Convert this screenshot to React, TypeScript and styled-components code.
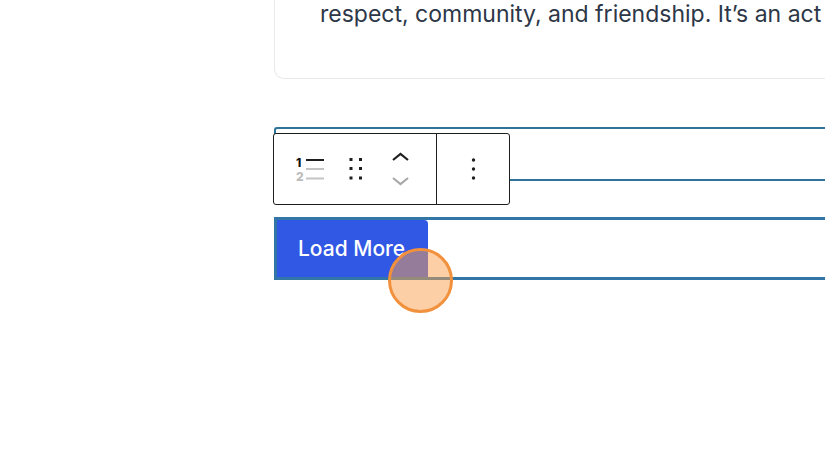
import styled, { createGlobalStyle } from "styled-components";

const GlobalStyle = createGlobalStyle`
  html, body {
    margin: 0;
    padding: 0;
    background: #fff;
    overflow: hidden;
  }
`;

function ListViewIcon() {
  return (
    <svg width="30" height="28" viewBox="0 0 30 28">
      <text x="0" y="12" fontFamily="Inter, sans-serif" fontSize="12" fontWeight="800" fill="#111">1</text>
      <text x="0" y="26" fontFamily="Inter, sans-serif" fontSize="12" fontWeight="800" fill="#bdbdbd">2</text>
      <path d="M10 5h18" stroke="#1e1e1e" strokeWidth="2" />
      <path d="M10 14h18M10 23.5h18" stroke="#c4c4c4" strokeWidth="2" />
    </svg>
  );
}

function DragIcon() {
  return (
    <svg width="14" height="24" viewBox="0 0 14 24" fill="#1e1e1e">
      <rect x="0.5" y="1" width="3" height="3" />
      <rect x="10" y="1" width="3" height="3" />
      <rect x="0.5" y="10" width="3" height="3" />
      <rect x="10" y="10" width="3" height="3" />
      <rect x="0.5" y="19.5" width="3" height="3" />
      <rect x="10" y="19.5" width="3" height="3" />
    </svg>
  );
}

function MoverIcon() {
  return (
    <svg width="18" height="36" viewBox="0 0 18 36" fill="none" strokeWidth="2.2">
      <path d="M1 9l7.5-6L16 9" stroke="#1e1e1e" />
      <path d="M1 27l7.5 6 7.5-6" stroke="#a8a8a8" />
    </svg>
  );
}

function MoreIcon() {
  return (
    <svg width="5" height="24" viewBox="0 0 5 24" fill="#1e1e1e">
      <circle cx="2.5" cy="3" r="1.7" />
      <circle cx="2.5" cy="12" r="1.7" />
      <circle cx="2.5" cy="21" r="1.7" />
    </svg>
  );
}

export default function App() {
  return (
    <Page>
      <GlobalStyle />
      <Content>
        <Card>
          <CardText>respect, community, and friendship. It’s an act</CardText>
        </Card>
        <HeadingBlock />
        <ButtonBlock>
          <LoadMore>Load More</LoadMore>
        </ButtonBlock>
        <Toolbar>
          <ToolGroup>
            <ListViewSlot><ListViewIcon /></ListViewSlot>
            <DragSlot><DragIcon /></DragSlot>
            <MoverSlot><MoverIcon /></MoverSlot>
          </ToolGroup>
          <MoreGroup><MoreIcon /></MoreGroup>
        </Toolbar>
        <ClickMarker />
      </Content>
    </Page>
  );
}

const Page = styled.div`
  width: 825px;
  height: 461px;
  overflow: hidden;
  padding-left: 274px;
  box-sizing: border-box;
  font-family: Inter, "Liberation Sans", sans-serif;
`;

const Content = styled.div`
  position: relative;
  width: 700px;
`;

const Card = styled.div`
  height: 79px;
  box-sizing: border-box;
  border: 1px solid #e8e9eb;
  border-top: none;
  border-radius: 0 0 10px 10px;
  padding-left: 45px;
`;

const CardText = styled.p`
  margin: 0;
  font-size: 23px;
  line-height: 28px;
  color: #2d3748;
  white-space: nowrap;
`;

const HeadingBlock = styled.div`
  margin-top: 48px;
  height: 54px;
  box-sizing: border-box;
  border: 2px solid #2f7398;
  border-right: none;
  border-radius: 3px 0 0 0;
`;

const ButtonBlock = styled.div`
  margin-top: 36px;
  height: 63px;
  box-sizing: border-box;
  border-top: 3px solid #3176a6;
  border-bottom: 3px solid #3176a6;
  border-left: 3px solid #3176a6;
`;

const LoadMore = styled.div`
  width: 151px;
  height: 57px;
  box-sizing: border-box;
  padding-left: 21px;
  display: flex;
  align-items: center;
  background: #3058e4;
  border-radius: 0 4px 0 0;
  color: #fff;
  font-size: 21px;
  font-weight: 500;
`;

const Toolbar = styled.div`
  position: absolute;
  left: -1px;
  top: 133px;
  width: 237px;
  height: 72px;
  box-sizing: border-box;
  display: flex;
  background: #fff;
  border: 1px solid #1e1e1e;
  border-radius: 3px;
`;

const ToolGroup = styled.div`
  width: 162px;
  display: flex;
  align-items: center;
  border-right: 1px solid #1e1e1e;
`;

const ListViewSlot = styled.div`
  margin-left: 22px;
  display: flex;
`;

const DragSlot = styled.div`
  margin-left: 23px;
  display: flex;
`;

const MoverSlot = styled.div`
  margin-left: 29px;
  display: flex;
`;

const MoreGroup = styled.div`
  flex: 1;
  display: flex;
  align-items: center;
  justify-content: center;
`;

const ClickMarker = styled.div`
  position: absolute;
  left: 114px;
  top: 248px;
  width: 65px;
  height: 65px;
  box-sizing: border-box;
  border-radius: 50%;
  border: 3px solid #f2913d;
  background: rgba(250, 160, 80, 0.5);
`;
